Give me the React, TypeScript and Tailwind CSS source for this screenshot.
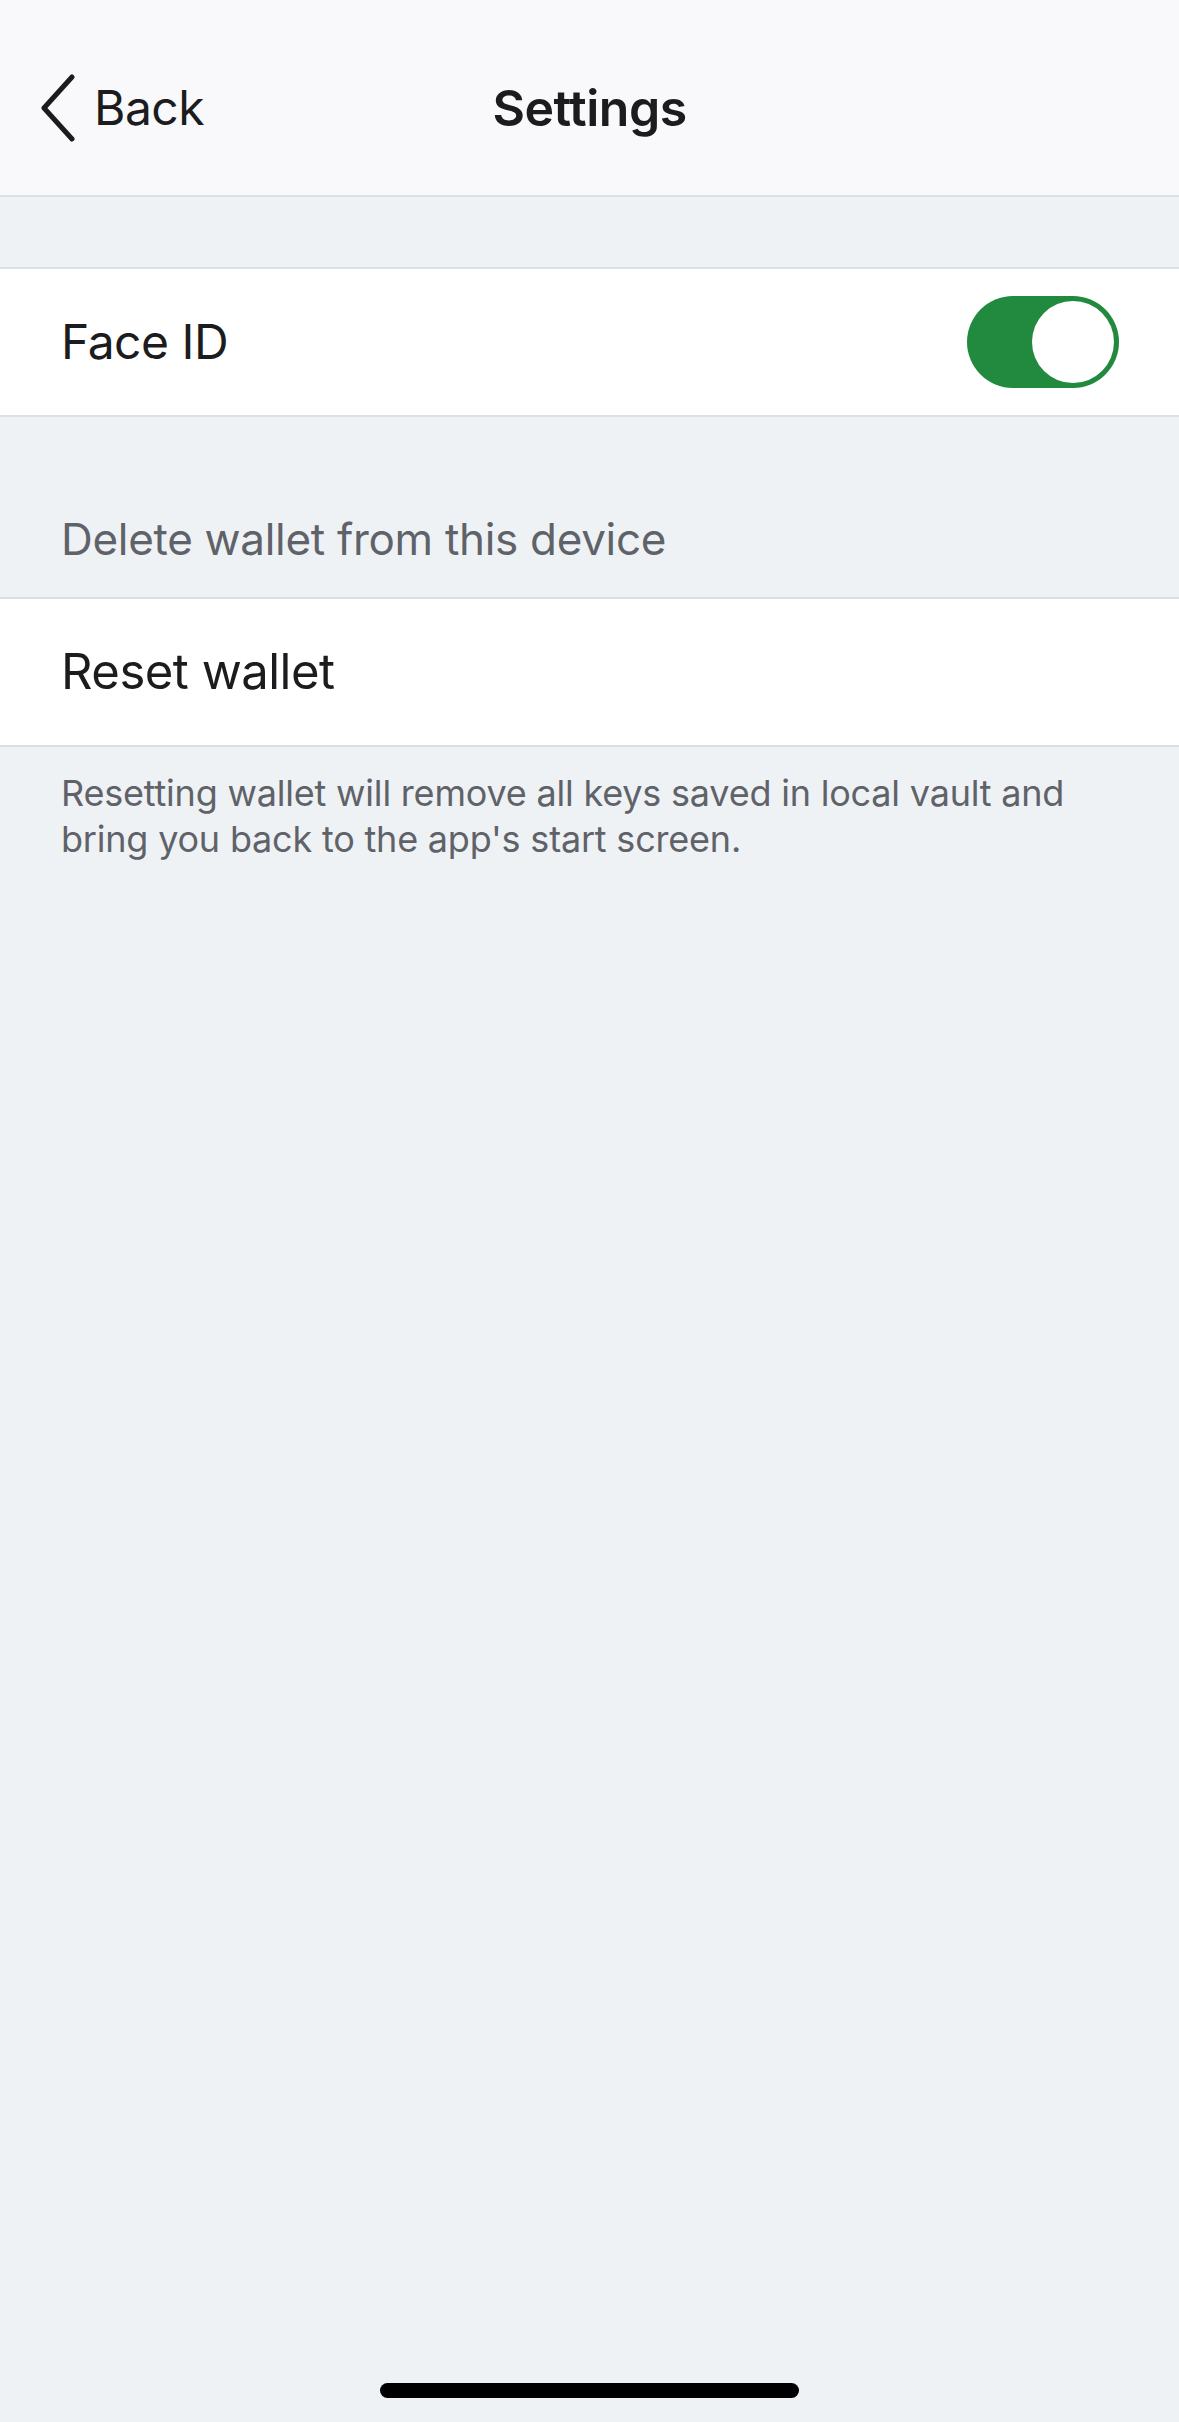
import React, { useState } from "react";

const font = "font-['Inter','Noto_Sans',sans-serif]";

function Toggle({ on, onChange }: { on: boolean; onChange: (v: boolean) => void }) {
  return (
    <button
      onClick={() => onChange(!on)}
      className={`relative h-[92px] w-[152px] rounded-full p-[5px] flex items-center ${
        on ? "bg-[#228a3f] justify-end" : "bg-[#e3e5e8] justify-start"
      }`}
    >
      <span className="block h-[82px] w-[82px] rounded-full bg-white" />
    </button>
  );
}

export default function App() {
  const [faceId, setFaceId] = useState(true);

  return (
    <div className={`min-h-[2422px] w-full flex flex-col bg-[#eff2f5] ${font}`}>
      {/* Nav bar */}
      <div className="h-[197px] grid grid-cols-[1fr_auto_1fr] items-center bg-[#f9f9fb] border-b-2 border-[#dcdfe3] pt-[20px]">
        <button className="flex items-center gap-[18px] pl-[40px] text-[#1c1c1e]">
          <svg width="36" height="68" viewBox="0 0 36 68" fill="none">
            <path d="M32 3 L4 34 L32 65" stroke="#1c1c1e" strokeWidth="5" strokeLinecap="round" strokeLinejoin="round" />
          </svg>
          <span className="text-[48px] leading-none tracking-[-0.5px]">Back</span>
        </button>
        <div className="text-[50px] font-semibold leading-none text-[#1c1c1e] tracking-[-0.5px]">Settings</div>
        <div />
      </div>

      <div className="h-[70px]" />

      {/* Face ID */}
      <div className="h-[150px] bg-white border-y-2 border-[#dcdfe3] flex items-center justify-between pl-[61px] pr-[60px]">
        <span className="text-[48px] text-[#1c1c1e] tracking-[-0.5px]">Face ID</span>
        <Toggle on={faceId} onChange={setFaceId} />
      </div>

      {/* Section header */}
      <div className="h-[180px] flex items-end pl-[61px] pb-[25px]">
        <span className="text-[44px] text-[#5f6369] tracking-[-0.3px]">Delete wallet from this device</span>
      </div>

      <div className="h-[150px] bg-white border-y-2 border-[#dcdfe3] flex items-center pl-[61px]">
        <span className="text-[49px] text-[#1c1c1e] tracking-[-0.5px]">Reset wallet</span>
      </div>

      <p className="pt-[23px] pl-[61px] pr-[40px] text-[36px] leading-[46px] text-[#5f6369] tracking-[-0.2px]">
        Resetting wallet will remove all keys saved in local vault and
        <br />
        bring you back to the app's start screen.
      </p>

      <div className="flex-1" />

      {/* Home indicator */}
      <div className="flex justify-center pb-[24px]">
        <div className="h-[15px] w-[419px] rounded-full bg-black" />
      </div>
    </div>
  );
}
